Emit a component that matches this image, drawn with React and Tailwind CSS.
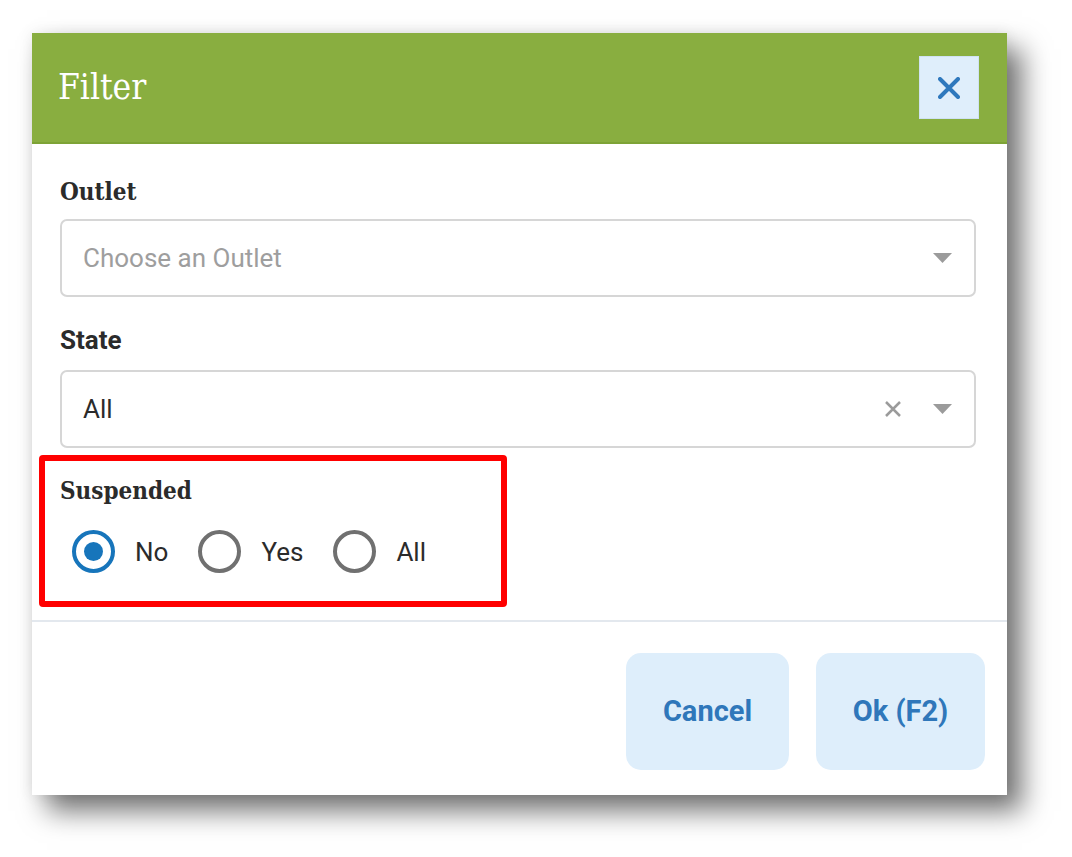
import React from "react";

const slab = { fontFamily: '"DejaVu Serif Condensed", "DejaVu Serif", "Liberation Serif", serif' };
const sans = { fontFamily: 'Roboto, "Liberation Sans", sans-serif' };

function Caret() {
  return (
    <svg width="19" height="10" viewBox="0 0 19 10">
      <path d="M0 0 H19 L9.5 10 Z" fill="#9b9b9b" />
    </svg>
  );
}

function Radio({ checked, label }) {
  return (
    <label className="flex items-center gap-[20px]">
      <span className={`flex h-[43px] w-[43px] items-center justify-center rounded-full border-[4px] ${checked ? "border-[#1775bb]" : "border-[#707070]"}`}>
        {checked && <span className="h-[19px] w-[19px] rounded-full bg-[#1775bb]" />}
      </span>
      <span className="text-[26px] leading-none text-[#2b2b2b]">{label}</span>
    </label>
  );
}

export default function App() {
  return (
    <div className="min-h-screen bg-white pl-[32px] pt-[33px]" style={sans}>
      <div className="relative flex h-[762px] w-[975px] flex-col bg-white shadow-[15px_16px_26px_rgba(0,0,0,0.55),0_0_14px_rgba(0,0,0,0.08)]">
        <div className="flex h-[111px] items-center justify-between border-b-2 border-[#7da336] bg-[#89ae40] pl-[26px] pr-[28px]">
          <h1 className="text-[35px] text-white" style={slab}>Filter</h1>
          <button className="flex h-[63px] w-[60px] items-center justify-center border border-[#cfe2f3] bg-[#dfeefb]">
            <svg width="22" height="22" viewBox="0 0 22 22">
              <path d="M2 2 L20 20 M20 2 L2 20" stroke="#2e78bd" strokeWidth="4" strokeLinecap="round" />
            </svg>
          </button>
        </div>

        <div className="flex-1 pl-[28px] pr-[31px] pt-[33px]">
          <div className="mb-[12px] text-[24px] font-bold leading-[30px] text-[#2b2b2b]" style={slab}>Outlet</div>
          <div className="flex h-[78px] items-center rounded-[7px] border-2 border-[#d6d6d6] pl-[21px] pr-[22px]">
            <span className="flex-1 text-[26px] text-[#9e9e9e]">Choose an Outlet</span>
            <Caret />
          </div>

          <div className="mb-[15px] mt-[28px] text-[26px] font-bold leading-[30px] text-[#2b2b2b]">State</div>
          <div className="flex h-[78px] items-center rounded-[7px] border-2 border-[#d6d6d6] pl-[21px] pr-[22px]">
            <span className="flex-1 text-[26px] text-[#2b2b2b]">All</span>
            <svg width="18" height="18" viewBox="0 0 18 18" className="mr-[31px]">
              <path d="M2 2 L16 16 M16 2 L2 16" stroke="#9b9b9b" strokeWidth="2.5" />
            </svg>
            <Caret />
          </div>

          <div className="mt-[28px] text-[24px] font-bold leading-[30px] text-[#2b2b2b]" style={slab}>Suspended</div>
          <div className="ml-[12px] mt-[24px] flex items-center gap-[30px]">
            <Radio checked label="No" />
            <Radio label="Yes" />
            <Radio label="All" />
          </div>
        </div>

        <div className="flex h-[175px] justify-end gap-[27px] border-t-2 border-[#e3e8ee] pr-[22px] pt-[31px]">
          <button className="h-[117px] w-[163px] rounded-[15px] bg-[#deeefb] text-[29px] font-bold text-[#2f77ba]">Cancel</button>
          <button className="h-[117px] w-[169px] rounded-[15px] bg-[#deeefb] text-[29px] font-bold text-[#2f77ba]">Ok (F2)</button>
        </div>

        <div className="pointer-events-none absolute left-[7px] top-[422px] h-[152px] w-[468px] rounded-[4px] border-[6px] border-[#ff0000]" />
      </div>
    </div>
  );
}
